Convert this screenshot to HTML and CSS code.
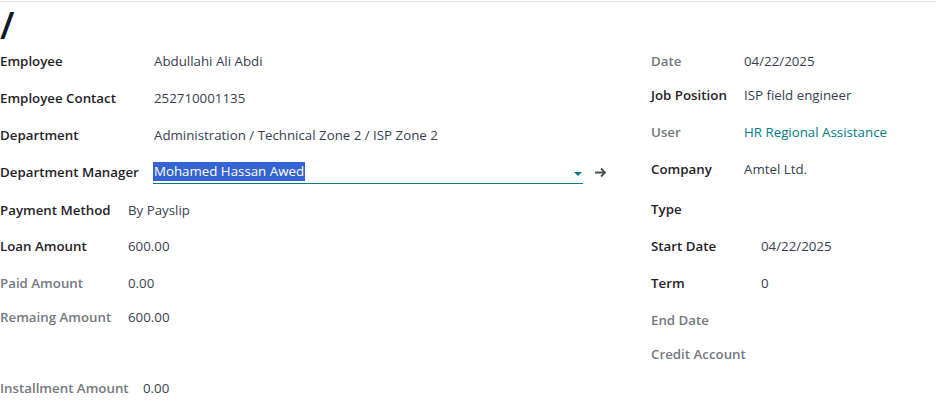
FILE: index.html
```html
<!DOCTYPE html>
<html>
<head>
<meta charset="utf-8">
<link rel="stylesheet" href="styles.css">
</head>
<body>
<div class="sheet">
  <h1 class="title">/</h1>
  <div class="cols">
    <div class="col col-left">
      <div class="group g-emp">
        <div class="row"><span class="lbl">Employee</span><span class="val">Abdullahi Ali Abdi</span></div>
        <div class="row"><span class="lbl">Employee Contact</span><span class="val">252710001135</span></div>
        <div class="row"><span class="lbl">Department</span><span class="val">Administration / Technical Zone 2 / ISP Zone 2</span></div>
        <div class="row r38"><span class="lbl">Department Manager</span>
          <span class="val input-wrap">
            <span class="input"><span class="sel">Mohamed Hassan Awed</span><span class="caret"></span></span>
            <svg class="arrow" width="13" height="11" viewBox="0 0 13 11"><path d="M1 5.5h10M7 1.5l4 4-4 4" fill="none" stroke="#4b5058" stroke-width="1.8"/></svg>
          </span>
        </div>
      </div>
      <div class="group g-pay">
        <div class="row r36"><span class="lbl">Payment Method</span><span class="val">By Payslip</span></div>
      </div>
      <div class="group g-pay">
        <div class="row"><span class="lbl">Loan Amount</span><span class="val">600.00</span></div>
        <div class="row r34"><span class="lbl muted">Paid Amount</span><span class="val">0.00</span></div>
        <div class="row r71"><span class="lbl muted">Remaing Amount</span><span class="val">600.00</span></div>
      </div>
      <div class="group g-inst">
        <div class="row"><span class="lbl muted">Installment Amount</span><span class="val">0.00</span></div>
      </div>
    </div>
    <div class="col col-right">
      <div class="group g-date">
        <div class="row r34"><span class="lbl muted">Date</span><span class="val">04/22/2025</span></div>
        <div class="row"><span class="lbl">Job Position</span><span class="val">ISP field engineer</span></div>
        <div class="row"><span class="lbl muted">User</span><span class="val link">HR Regional Assistance</span></div>
        <div class="row r40"><span class="lbl">Company</span><span class="val">Amtel Ltd.</span></div>
      </div>
      <div class="group g-term">
        <div class="row"><span class="lbl">Type</span><span class="val"></span></div>
        <div class="row"><span class="lbl">Start Date</span><span class="val">04/22/2025</span></div>
        <div class="row"><span class="lbl">Term</span><span class="val">0</span></div>
        <div class="row r34"><span class="lbl muted">End Date</span><span class="val"></span></div>
        <div class="row"><span class="lbl muted">Credit Account</span><span class="val"></span></div>
      </div>
    </div>
  </div>
</div>
</body>
</html>
```
FILE: styles.css
```css
html, body {
  margin: 0;
  padding: 0;
  background: #fff;
}
body {
  font-family: "Open Sans", "Noto Sans", sans-serif;
  font-size: 13.3px;
  color: #374151;
}
.sheet {
  margin-top: 1px;
  border-top: 1px solid #dee2e6;
}
.title {
  margin: 0;
  height: 50px;
  font-size: 37px;
  line-height: 46px;
  font-weight: 600;
  color: #111827;
}
.cols {
  display: flex;
}
.col-left {
  width: 651px;
}
.col-right {
  flex: 1;
}
.row {
  display: flex;
  align-items: flex-start;
  height: 37px;
  line-height: 18px;
}
.r34 { height: 34px; }
.r36 { height: 36px; }
.r38 { height: 38px; }
.r40 { height: 40px; }
.r71 { height: 71px; }
.lbl {
  flex: none;
  font-weight: 600;
  color: #1f2328;
}
.lbl.muted {
  color: #74797f;
}
.g-emp .lbl { width: 154px; }
.g-pay .lbl { width: 128px; }
.g-inst .lbl { width: 143px; }
.g-date .lbl { width: 93px; }
.g-term .lbl { width: 110px; }
.val {
  color: #374151;
}
.link {
  color: #017e84;
}
.input-wrap {
  display: flex;
  align-items: center;
  gap: 11px;
}
.input {
  position: relative;
  display: block;
  width: 430px;
  height: 22px;
  margin-left: -1px;
  margin-top: -1px;
  border-bottom: 1px solid #017e84;
  box-sizing: border-box;
}
.sel {
  display: inline-block;
  background: #3563d4;
  color: #fff;
  line-height: 19px;
  padding: 0 1px 0 1px;
}
.caret {
  position: absolute;
  right: 1px;
  top: 10px;
  width: 0;
  height: 0;
  border-left: 4px solid transparent;
  border-right: 4px solid transparent;
  border-top: 4px solid #017e84;
}
.arrow {
  display: block;
  margin-top: -2px;
}
```
